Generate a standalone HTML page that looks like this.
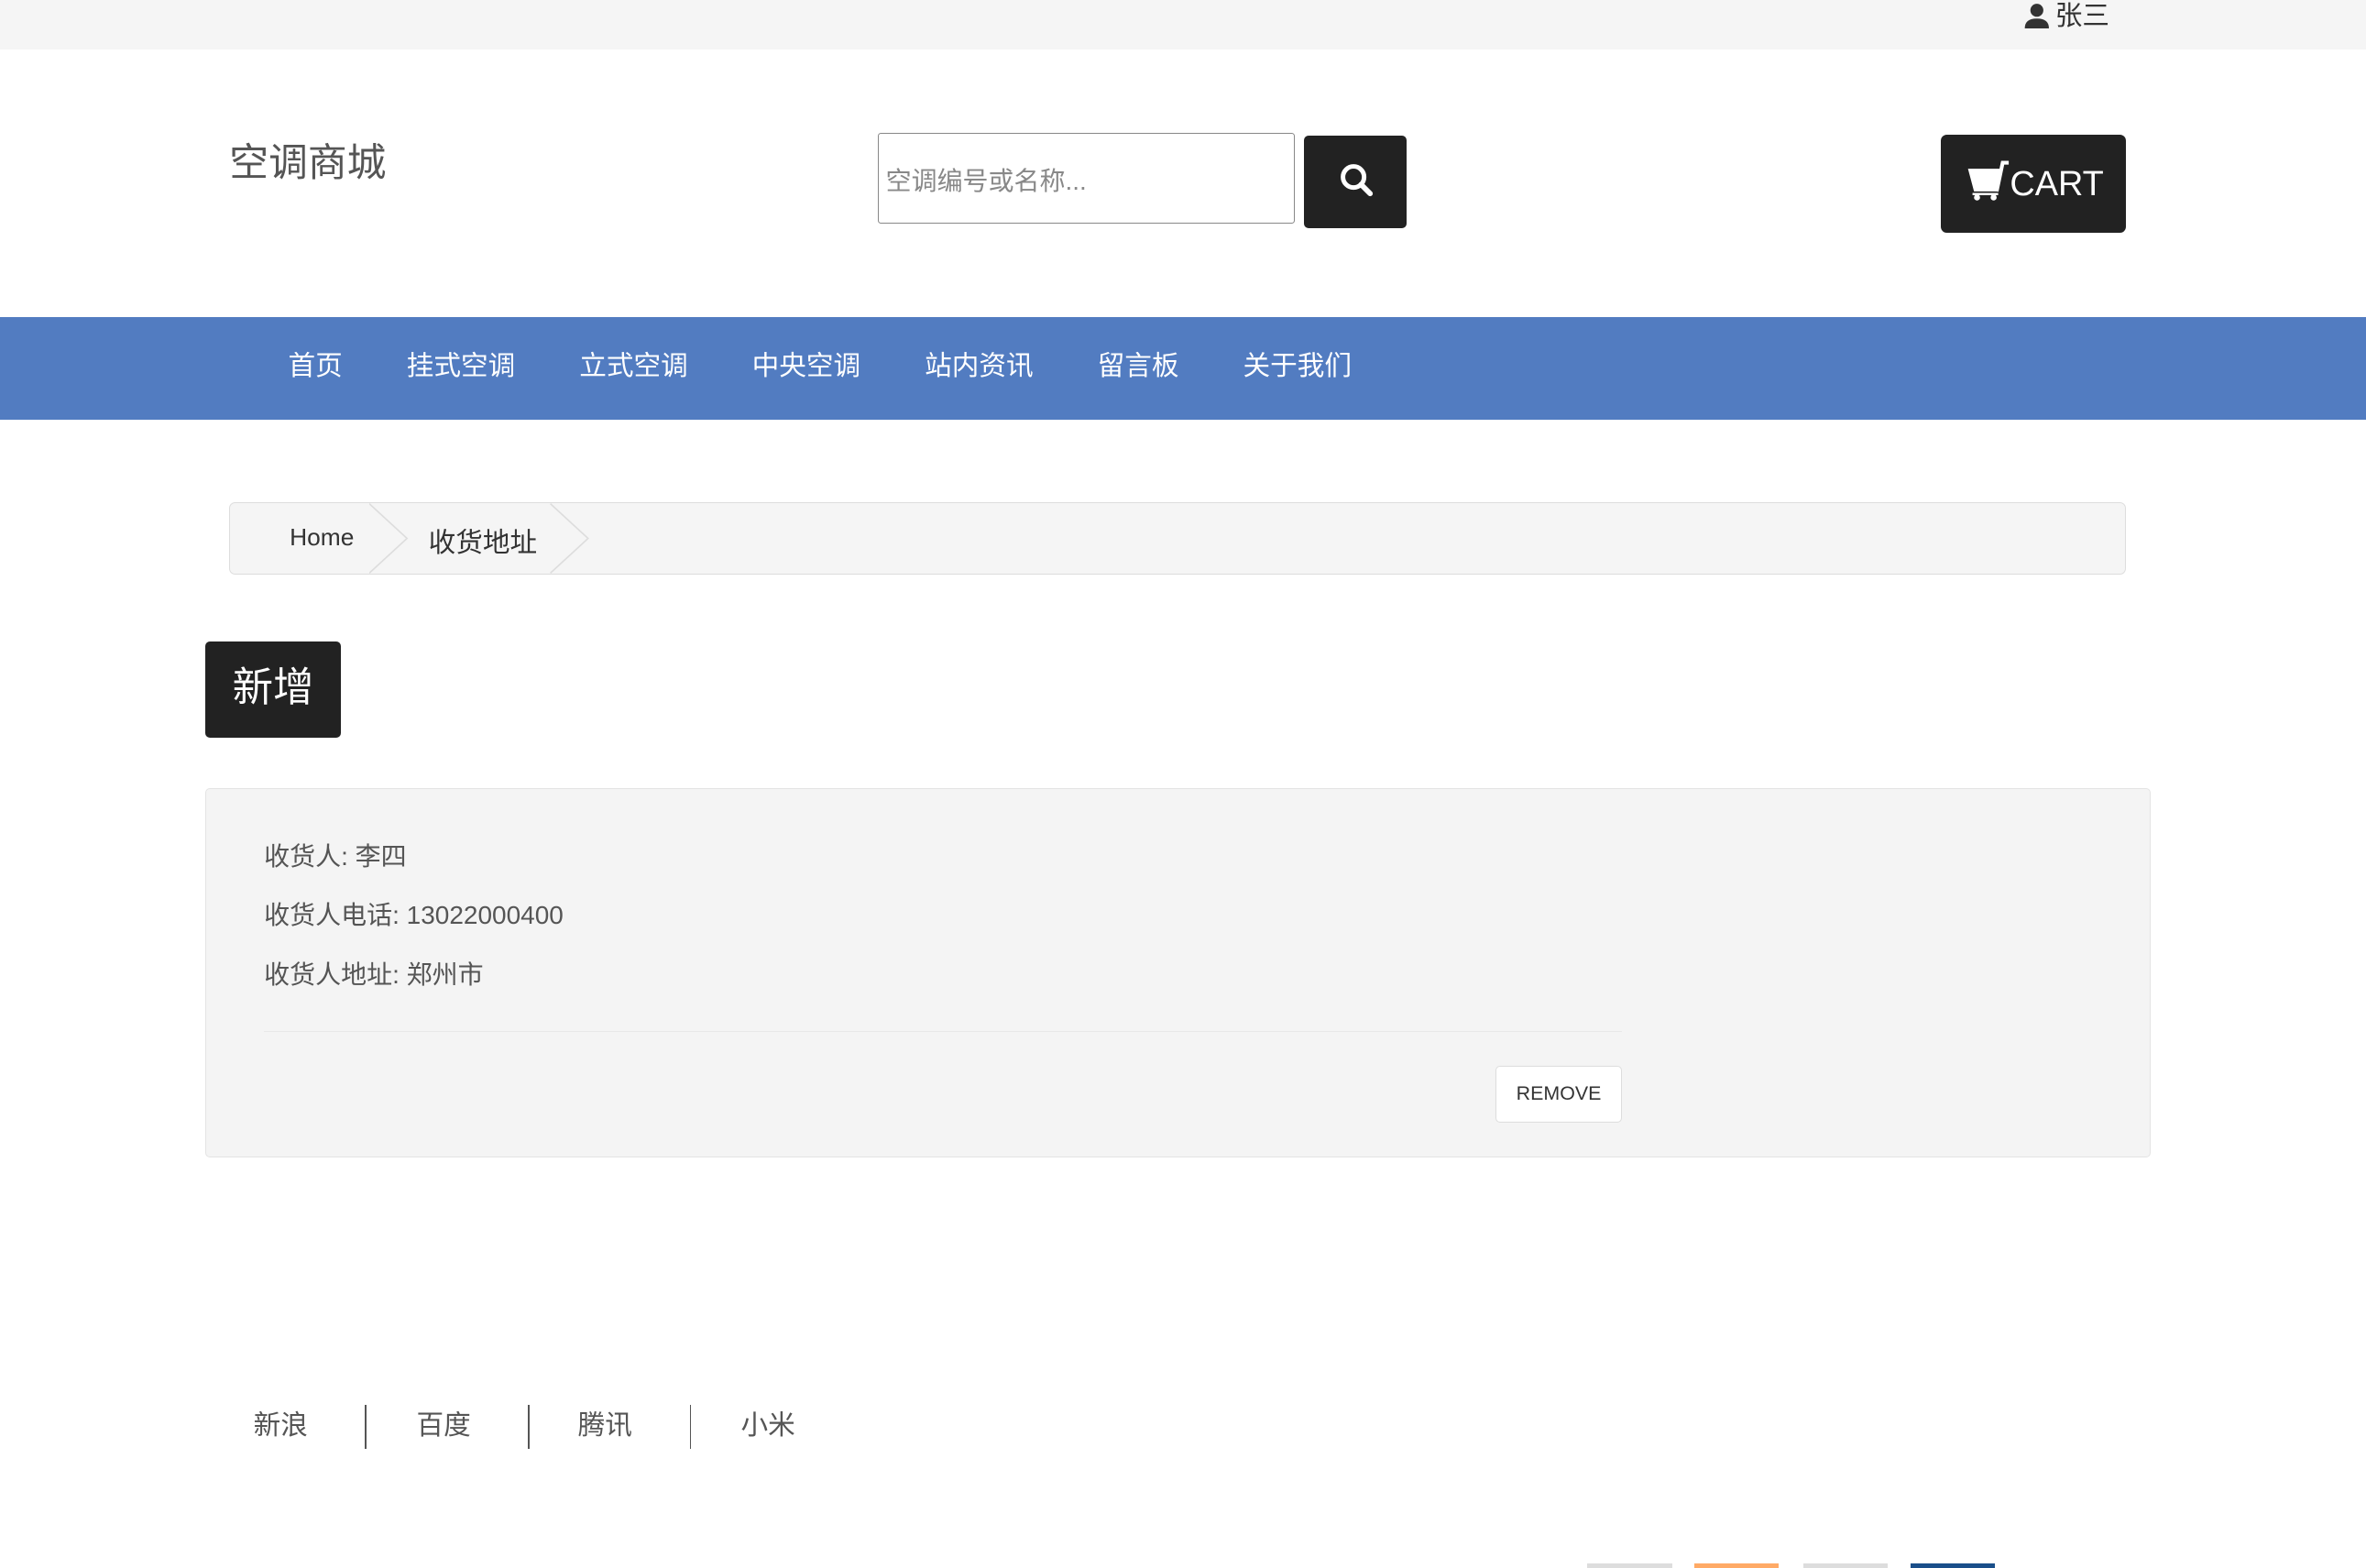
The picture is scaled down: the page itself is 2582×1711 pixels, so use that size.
<!DOCTYPE html>
<html><head><meta charset="utf-8">
<style>
html,body{margin:0;padding:0;}
body{width:1568px;height:1038px;zoom:1.64668;position:relative;overflow:hidden;background:#fff;font-family:"Liberation Sans","Noto Sans CJK SC",sans-serif;color:#333;}
.a{position:absolute;}
</style></head><body>
<div class="a" style="left:0;top:0;width:1568px;height:33px;background:#f5f5f5"></div>
<div class="a" style="left:1341px;top:0;height:22px;font-size:18px;color:#333;line-height:22px;display:flex;align-items:center">
<svg width="18" height="18" viewBox="0 0 18 18"><circle cx="9" cy="5" r="4.3" fill="#333"/><path d="M1 17 Q1 10.5 9 10.5 Q17 10.5 17 17Z" fill="#333"/></svg><span style="margin-left:3px">张三</span></div>

<div class="a" style="left:152px;top:87px;font-size:26px;color:#555">空调商城</div>
<div class="a" style="left:582px;top:88px;width:276px;height:60px;border:1px solid #888;border-radius:2px;box-sizing:border-box;"></div>
<div class="a" style="left:587px;top:107px;font-size:17px;color:#888">空调编号或名称...</div>
<div class="a" style="left:864px;top:90px;width:68px;height:61px;background:#222;border-radius:3px"></div>
<svg class="a" style="left:886px;top:106px" width="26" height="26" viewBox="0 0 26 26"><circle cx="11" cy="11" r="7" fill="none" stroke="#fff" stroke-width="3"/><path d="M16 16 L22 22" stroke="#fff" stroke-width="3.5" stroke-linecap="round"/></svg>

<div class="a" style="left:1286px;top:89px;width:123px;height:65px;background:#222;border-radius:4px"></div>
<svg class="a" style="left:1303px;top:104px" width="30" height="30" viewBox="0 0 30 30"><path d="M1 8 L22 8 L20 23 L5 23 Z" fill="#fff"/><path d="M20 23 L24 4 L28 4" fill="none" stroke="#fff" stroke-width="2.5"/><circle cx="7" cy="27" r="2" fill="#fff"/><circle cx="18" cy="27" r="2" fill="#fff"/><rect x="4" y="24" width="17" height="1.5" fill="#fff"/></svg>
<div class="a" style="left:1332px;top:106px;font-size:23px;color:#fff;line-height:32px">CART</div>

<div class="a" style="left:0;top:210px;width:1568px;height:68px;background:#527cc1"></div>
<div class="a" style="left:191px;top:231px;font-size:18px;color:#fff;line-height:24px;white-space:nowrap">
<span>首页</span><span style="margin-left:42.5px">挂式空调</span><span style="margin-left:42.5px">立式空调</span><span style="margin-left:42.5px">中央空调</span><span style="margin-left:42.5px">站内资讯</span><span style="margin-left:42.5px">留言板</span><span style="margin-left:42.5px">关于我们</span></div>

<div class="a" style="left:152px;top:333px;width:1257px;height:48px;background:#f5f5f5;border:1px solid #ddd;border-radius:4px;box-sizing:border-box"></div>
<svg class="a" style="left:245px;top:333px" width="150" height="48"><path d="M0 1 L25 24 L0 47" fill="none" stroke="#ddd"/><path d="M120 1 L145 24 L120 47" fill="none" stroke="#ddd"/></svg>
<div class="a" style="left:192px;top:347px;font-size:16px;color:#333">Home</div>
<div class="a" style="left:284px;top:345px;font-size:18px;color:#333">收货地址</div>

<div class="a" style="left:136px;top:425px;width:90px;height:64px;background:#222;border-radius:3px;color:#fff;font-size:27px;line-height:62px;text-align:center">新增</div>

<div class="a" style="left:136px;top:522px;width:1289px;height:245px;background:#f4f4f4;border:1px solid #e3e3e3;border-radius:3px;box-sizing:border-box"></div>
<div class="a" style="left:175px;top:557px;font-size:17px;color:#555;line-height:22px">收货人: 李四</div>
<div class="a" style="left:175px;top:596px;font-size:17px;color:#555;line-height:22px">收货人电话: 13022000400</div>
<div class="a" style="left:175px;top:635px;font-size:17px;color:#555;line-height:22px">收货人地址: 郑州市</div>
<div class="a" style="left:175px;top:683px;width:900px;height:1px;background:#e8e8e8"></div>
<div class="a" style="left:991px;top:706px;width:84px;height:38px;background:#fff;border:1px solid #ddd;border-radius:3px;box-sizing:border-box;font-size:13px;color:#333;line-height:36px;text-align:center">REMOVE</div>

<div class="a" style="left:168px;top:933px;font-size:18px;color:#555;line-height:24px">新浪</div>
<div class="a" style="left:242px;top:931px;width:1px;height:29px;background:#555"></div>
<div class="a" style="left:276px;top:933px;font-size:18px;color:#555;line-height:24px">百度</div>
<div class="a" style="left:350px;top:931px;width:1px;height:29px;background:#555"></div>
<div class="a" style="left:383px;top:933px;font-size:18px;color:#555;line-height:24px">腾讯</div>
<div class="a" style="left:457px;top:931px;width:1px;height:29px;background:#555"></div>
<div class="a" style="left:491px;top:933px;font-size:18px;color:#555;line-height:24px">小米</div>

<div class="a" style="left:1052px;top:1036px;width:56px;height:3px;background:#ddd"></div>
<div class="a" style="left:1123px;top:1036px;width:56px;height:3px;background:#fa6"></div>
<div class="a" style="left:1195px;top:1036px;width:56px;height:3px;background:#ddd"></div>
<div class="a" style="left:1266px;top:1036px;width:56px;height:3px;background:#1a4f8a"></div>
</body></html>
